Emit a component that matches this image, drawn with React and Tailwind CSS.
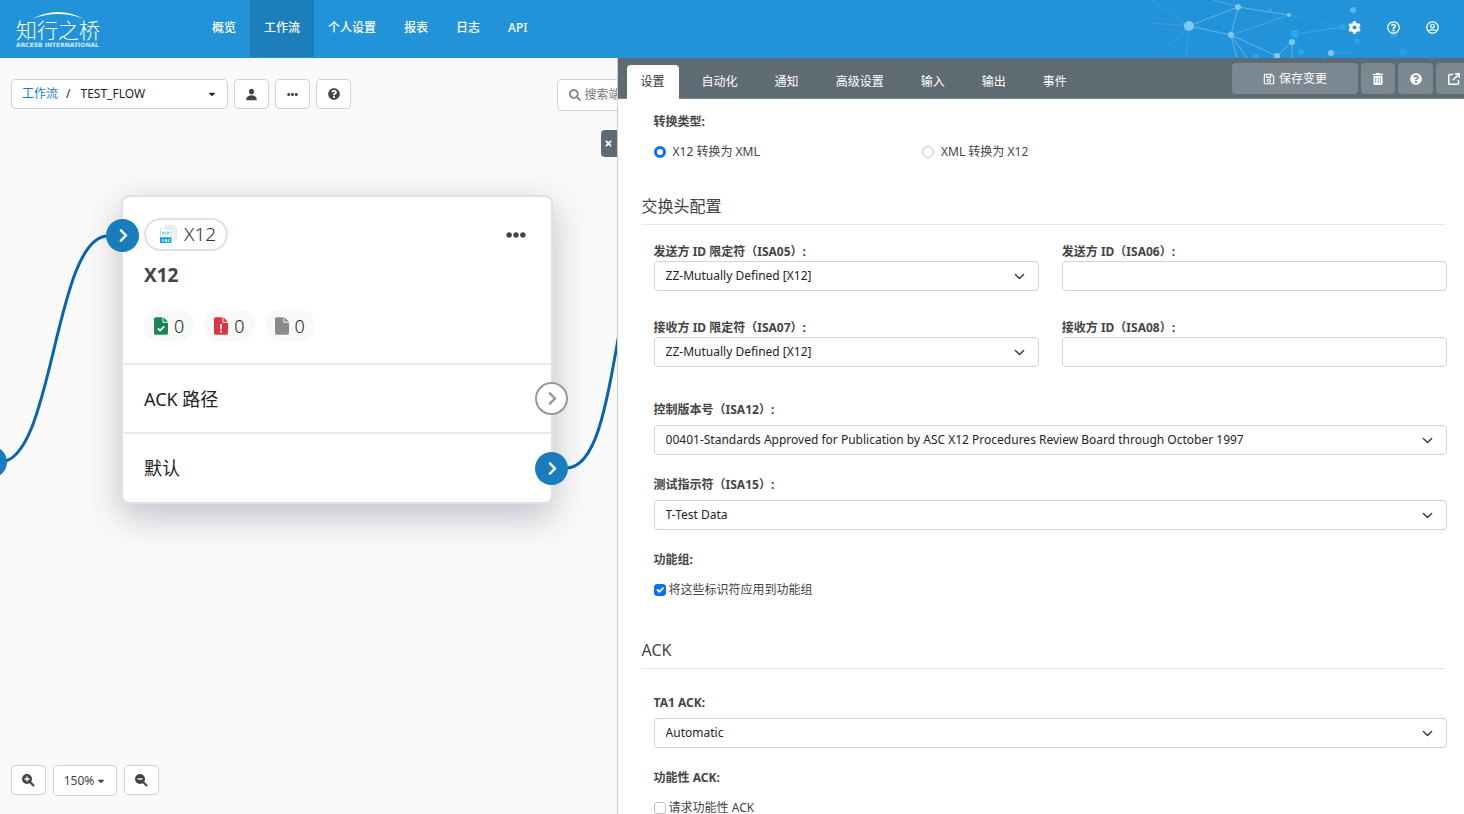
import { useState } from 'react'
import {
  FaEllipsisH, FaQuestionCircle, FaSearch, FaCaretDown, FaRegQuestionCircle,
  FaRegUserCircle, FaCog, FaRegSave, FaTimes, FaChevronRight,
} from 'react-icons/fa'
import { FaArrowUpRightFromSquare, FaTrashCan } from 'react-icons/fa6'
import { IoPerson } from 'react-icons/io5'

const NAV_ITEMS = ['概览', '工作流', '个人设置', '报表', '日志', 'API']
const TABS = ['设置', '自动化', '通知', '高级设置', '输入', '输出', '事件']

const toolButton = 'flex h-[30px] w-[35px] items-center justify-center rounded border border-[#ced4da] bg-white text-[#444]'
const actionButton = 'flex h-[31px] shrink-0 items-center justify-center gap-1 rounded bg-[#7b8791] text-white'

function Logo() {
  return (
    <svg width="86" height="38" viewBox="0 0 86 38" className="shrink-0" fill="#fff" role="img" aria-label="知行之桥">
      <path d="M17 9 Q43 -5 69 9 Q43 -1 17 9Z" />
      <text x="1" y="28" fontSize="21" fontWeight="300" fontFamily="'Noto Sans CJK SC', sans-serif">知行之桥</text>
      <text x="1" y="37" fontSize="6" fontWeight="700" opacity="0.8" fontFamily="'DejaVu Sans', sans-serif">ARCESB INTERNATIONAL</text>
    </svg>
  )
}

function NetworkArt() {
  return (
    <svg width="334" height="58" viewBox="0 0 334 58" className="absolute top-0 right-0" aria-hidden="true">
      <g stroke="#7cc4f3" fill="none" opacity="0.7">
        <path d="M59 26 L108 7 L101 35 L59 26 M101 35 L147 56 L162 42 V58 M101 35 L117 58 M101 35 L107 58 M108 7 L159 15" />
        <path d="M101 35 L159 15 M108 7 L83 0" opacity="0.6" />
        <path d="M59 26 L22 0 M59 26 L22 23 M59 26 L26 58 M59 26 L56 58 M201 53 H228 M201 53 L192 58" opacity="0.35" />
      </g>
      <path d="M165 34 L213 27" stroke="#35aef3" opacity="0.8" fill="none" />
      <path d="M140 10 L165 34 M213 27 L159 15 M165 34 L170 52" stroke="#35aef3" opacity="0.4" fill="none" />
      <g fill="#7cc8f7">
        <circle cx="59" cy="26" r="5" />
        <circle cx="108" cy="7" r="3" />
        <circle cx="101" cy="35" r="3" />
        <circle cx="162" cy="42" r="3" />
        <circle cx="147" cy="56" r="3" />
        <circle cx="201" cy="53" r="3" />
        <circle cx="159" cy="15" r="2" />
      </g>
      <g fill="#27a9f2">
        <circle cx="165" cy="34" r="4" />
        <circle cx="213" cy="27" r="3" />
        <circle cx="171" cy="52" r="3" />
        <circle cx="126" cy="57" r="3" />
        <circle cx="140" cy="10" r="2" />
      </g>
      <circle cx="223" cy="10" r="3" fill="#5eb5ee" />
      <circle cx="227" cy="41" r="3" fill="#2ea0e6" />
      <circle cx="273" cy="52" r="4" fill="#2e9de0" />
      <circle cx="264" cy="34" r="4" fill="#2ea0e6" />
    </svg>
  )
}

function Header() {
  return (
    <header className="relative flex h-[58px] shrink-0 items-center overflow-hidden bg-[#2293d8] pr-[25px] pl-[15px] text-white">
      <NetworkArt />
      <Logo />
      <nav className="ml-[97px] flex h-full pb-px">
        {NAV_ITEMS.map(item => (
          <a
            key={item}
            href="#"
            className={`flex items-center px-3.5 pb-0.5 font-medium ${item === '工作流' ? 'bg-[#1c7ebb]' : ''}`}
          >
            {item}
          </a>
        ))}
      </nav>
      <div className="relative ml-auto flex gap-[26px] pb-1 text-[13px]">
        <button type="button" aria-label="系统设置"><FaCog /></button>
        <button type="button" aria-label="帮助"><FaRegQuestionCircle /></button>
        <button type="button" aria-label="账户"><FaRegUserCircle /></button>
      </div>
    </header>
  )
}

function ZoomIcon({ plus }) {
  return (
    <svg width="13" height="13" viewBox="0 0 13 13" fill="none" aria-hidden="true">
      <circle cx="5" cy="5" r="5" fill="#444" />
      <path d="M8 8L12 12" stroke="#444" strokeWidth="2.2" />
      <path d={plus ? 'M2.500 5H7.500M5 2.500V7.500' : 'M2.500 5H7.500'} stroke="#fff" strokeWidth="1.4" />
    </svg>
  )
}

function FileIcon({ color, mark }) {
  return (
    <svg width="14" height="18" viewBox="0 0 15 19" aria-hidden="true">
      <path d="M2 0H9V5Q9 6 10 6H15V17Q15 19 13 19H2Q0 19 0 17V2Q0 0 2 0Z" fill={color} />
      <path d="M10 0L15 5H10Z" fill={color} />
      {mark === 'check' && <path d="M4 12L6.500 14.500L11 10" fill="none" stroke="#fff" strokeWidth="1.8" />}
      {mark === 'alert' && <path d="M6.500 7.500H8.500V13H6.500ZM6.500 14.500H8.500V16.500H6.500Z" fill="#fff" />}
    </svg>
  )
}

function X12Icon() {
  return (
    <svg width="17" height="18" viewBox="0 0 18 19" aria-hidden="true">
      <path d="M6 .5H14L17.500 4V15.500H6Z" fill="#eef0f2" stroke="#e3e5e9" />
      <path d="M.5 3.500H11.500V14H.5Z" fill="#fff" stroke="#bfe5f5" />
      <path d="M2.500 7L4.500 10M4.500 7L2.500 10M6 7V10M7.500 7.500H9.500V9H7.500" stroke="#5fbfe8" fill="none" />
      <path d="M0 13H12V19H0Z" fill="#0a9fe0" />
      <path d="M2 17.500L3 15L4 17.500M7.500 15.500H5.500V16.500H7.500V17.500H5.500M10.500 15.500H9V17.500H10.500" stroke="#d8f1fb" fill="none" />
    </svg>
  )
}

function Port({ filled, className }) {
  return (
    <button
      type="button"
      aria-label="端口"
      className={`absolute flex size-[33px] items-center justify-center rounded-full pl-0.5 ${
        filled ? 'bg-[#197dbb] text-white' : 'border-2 border-[#999] bg-white text-[#999]'
      } ${className}`}
    >
      <FaChevronRight size={15} />
    </button>
  )
}

function FlowNode() {
  const counts = [
    { label: '成功', color: '#198754', mark: 'check' },
    { label: '错误', color: '#dc3545', mark: 'alert' },
    { label: '待处理', color: '#8a8a8a' },
  ]
  return (
    <article className="absolute top-[137px] left-[121px] w-[432px] rounded-lg border-2 border-[#dee2e6] bg-white text-[18px] text-[#222] shadow-[0_12px_36px_rgba(40,40,70,0.28)]">
      <div className="px-[21px] pt-[21px] pb-[21px]">
        <div className="flex items-center justify-between">
          <span className="flex h-[33px] items-center gap-[7px] rounded-full border-2 border-[#dee2e6] pr-2.5 pb-0.5 pl-3.5 text-[19px] font-light text-[#333]">
            <X12Icon />X12
          </span>
          <button type="button" aria-label="更多" className="mr-1 text-[#444]"><FaEllipsisH size={20} /></button>
        </div>
        <h2 className="mt-2.5 text-[19px] leading-7 font-bold text-[#444]">X12</h2>
        <div className="mt-5 flex gap-2.5">
          {counts.map(c => (
            <span key={c.label} title={c.label} className="flex h-[33px] items-center gap-1.5 rounded-full bg-[#f8f9fa] px-2.5 font-light">
              <FileIcon color={c.color} mark={c.mark} />0
            </span>
          ))}
        </div>
      </div>
      <div className="relative flex h-[69px] items-center border-t-2 border-[#e9eaec] px-[21px]">
        ACK 路径
        <Port className="-right-[17px]" />
      </div>
      <div className="relative flex h-[70px] items-center border-t-2 border-[#e9eaec] px-[21px]">
        默认
        <Port filled className="-right-[17px]" />
      </div>
      <Port filled className="top-[22px] -left-[17px]" />
    </article>
  )
}

function FlowCanvas({ onClose }) {
  return (
    <section className="relative flex min-w-0 flex-[617] flex-col justify-between overflow-hidden bg-[#fafafa]">
      <svg className="absolute inset-0 size-full" fill="none" stroke="#0864b1" strokeWidth="3" aria-hidden="true">
        <path d="M0 404C54 404 54 178 108 178M566 410C596 410 606 350 620 270" />
        <circle cx="-9" cy="404" r="16" fill="#197dbb" stroke="none" />
      </svg>
      <FlowNode />
      <div>
        <div className="relative flex items-start gap-1.5 pt-[21px] pl-[11px]">
          <button type="button" className="flex h-[30px] w-[217px] shrink-0 items-center rounded border border-[#ced4da] bg-white px-2.5 text-[#222]">
            <span className="text-[#1c7ebb]">工作流</span>
            <span className="mr-2.5 ml-2">/</span>
            <span>TEST_FLOW</span>
            <FaCaretDown size={10} className="ml-auto" />
          </button>
          <button type="button" aria-label="用户" className={toolButton}><IoPerson size={13} /></button>
          <button type="button" aria-label="更多" className={toolButton}><FaEllipsisH size={11} /></button>
          <button type="button" aria-label="帮助" className={toolButton}><FaQuestionCircle /></button>
          <label className="-mr-[140px] ml-auto flex h-8 w-[200px] shrink-0 items-center gap-1 rounded border border-[#ced4da] bg-white px-[11px] text-[#8a8a8a]">
            <FaSearch size={12} className="shrink-0" />
            <input type="search" aria-label="搜索" placeholder="搜索端口" className="min-w-0 flex-1 outline-none placeholder:text-[#777]" />
          </label>
        </div>
        <button
          type="button"
          aria-label="关闭"
          onClick={onClose}
          className="relative mt-[19px] ml-auto flex h-[27px] w-4 items-center justify-center rounded-l-sm bg-[#5f6b73] text-white"
        >
          <FaTimes size={9} />
        </button>
      </div>
      <div className="relative flex items-start gap-[7px] pb-[18px] pl-[11px]">
        <button type="button" aria-label="放大" className={toolButton}><ZoomIcon plus /></button>
        <button type="button" className="flex h-[31px] w-16 items-center justify-center gap-0.5 rounded border border-[#ced4da] bg-white text-[#444]">
          150% <FaCaretDown size={10} />
        </button>
        <button type="button" aria-label="缩小" className={toolButton}><ZoomIcon /></button>
      </div>
    </section>
  )
}

function SectionTitle({ children, className }) {
  return (
    <h3 className={`-ml-3 mr-0.5 border-b border-[#e6e8ea] pb-1.5 text-[16px] leading-6 ${className}`}>{children}</h3>
  )
}

function SelectField({ id, label, value, className = '', gap = 'gap-1.5' }) {
  return (
    <div className={`flex flex-col ${gap} ${className}`}>
      <label htmlFor={id} className="font-bold">{label}</label>
      <div className="grid items-center">
        <select id={id} className="col-start-1 row-start-1 h-[30px] w-full appearance-none rounded border border-[#ced4da] bg-white px-[11px] text-[#212529]">
          <option>{value}</option>
        </select>
        <svg width="11" height="11" viewBox="0 0 16 16" className="pointer-events-none col-start-1 row-start-1 mr-3.5 justify-self-end" fill="none" stroke="#343a40" strokeWidth="2" strokeLinecap="round" strokeLinejoin="round" aria-hidden="true">
          <path d="m2 5 6 6 6-6" />
        </svg>
      </div>
    </div>
  )
}

function TextField({ id, label }) {
  return (
    <div className="flex flex-col">
      <label htmlFor={id} className="font-bold">{label}</label>
      <input id={id} type="text" className="h-[30px] w-full rounded border border-[#ced4da] bg-white px-[11px]" />
    </div>
  )
}

function Checkbox({ label, defaultChecked }) {
  const [checked, setChecked] = useState(!!defaultChecked)
  return (
    <label className="mt-3 flex items-center gap-[3px]">
      <span className="grid place-items-center">
        <input
          type="checkbox"
          checked={checked}
          onChange={e => setChecked(e.target.checked)}
          className="col-start-1 row-start-1 size-3 appearance-none rounded-[3px] border border-[#bfbfbf] bg-white checked:border-[#0d6efd] checked:bg-[#0d6efd]"
        />
        {checked && (
          <svg width="12" height="12" viewBox="0 0 20 20" className="pointer-events-none col-start-1 row-start-1" fill="none" stroke="#fff" strokeWidth="3" strokeLinecap="round" strokeLinejoin="round" aria-hidden="true">
            <path d="m6 10 3 3 6-6" />
          </svg>
        )}
      </span>
      {label}
    </label>
  )
}

function Radio({ label, defaultChecked }) {
  return (
    <label className="flex items-center gap-[7px]">
      <input
        type="radio"
        name="translation"
        defaultChecked={defaultChecked}
        className="size-3 appearance-none rounded-full border border-[#bfbfbf] bg-white checked:border-[3px] checked:border-[#0d6efd]"
      />
      {label}
    </label>
  )
}

function SettingsPanel() {
  const [tab, setTab] = useState('设置')
  return (
    <section className="flex min-w-0 flex-[847] flex-col overflow-hidden border-l border-[#ccc] bg-white text-[#444]">
      <div className="flex h-[41px] shrink-0 items-end border-b border-[#7b8791] bg-[#5f6b73] pl-[9px]">
        <div role="tablist" className="flex gap-[9px]">
          {TABS.map(t => (
            <button
              key={t}
              type="button"
              role="tab"
              aria-selected={tab === t}
              onClick={() => setTab(t)}
              className={`-mb-px h-[34px] rounded-t px-3.5 whitespace-nowrap ${tab === t ? 'bg-white text-[#333]' : 'text-white'}`}
            >
              {t}
            </button>
          ))}
        </div>
        <div className="-mr-[7px] mb-1 ml-auto flex gap-[3px]">
          <button type="button" className={`${actionButton} w-[126px]`}><FaRegSave />保存变更</button>
          <button type="button" aria-label="删除" className={`${actionButton} w-[34px]`}><FaTrashCan /></button>
          <button type="button" aria-label="帮助" className={`${actionButton} w-[35px]`}><FaQuestionCircle /></button>
          <button type="button" aria-label="在新窗口打开" className={`${actionButton} w-[35px]`}><FaArrowUpRightFromSquare /></button>
        </div>
      </div>

      <form className="min-h-0 flex-1 overflow-hidden pt-3.5 pr-[17px] pl-9">
        <fieldset>
          <legend className="font-bold">转换类型:</legend>
          <div className="mt-3 grid grid-cols-3 gap-3">
            <Radio label="X12 转换为 XML" defaultChecked />
            <Radio label="XML 转换为 X12" />
          </div>
        </fieldset>

        <SectionTitle className="mt-[33px]">交换头配置</SectionTitle>
        <div className="mt-[18px] grid grid-cols-2 gap-x-[23px] gap-y-7">
          <SelectField id="isa05" label="发送方 ID 限定符（ISA05）:" value="ZZ-Mutually Defined [X12]" gap="gap-0" />
          <TextField id="isa06" label="发送方 ID（ISA06）:" />
          <SelectField id="isa07" label="接收方 ID 限定符（ISA07）:" value="ZZ-Mutually Defined [X12]" gap="gap-0" />
          <TextField id="isa08" label="接收方 ID（ISA08）:" />
        </div>
        <SelectField
          id="isa12"
          label="控制版本号（ISA12）:"
          value="00401-Standards Approved for Publication by ASC X12 Procedures Review Board through October 1997"
          className="mt-[34px]"
        />
        <SelectField id="isa15" label="测试指示符（ISA15）:" value="T-Test Data" className="mt-[21px]" />
        <fieldset className="mt-[21px]">
          <legend className="font-bold">功能组:</legend>
          <Checkbox label="将这些标识符应用到功能组" defaultChecked />
        </fieldset>

        <SectionTitle className="mt-[39px]">ACK</SectionTitle>
        <SelectField id="ta1" label="TA1 ACK:" value="Automatic" className="mt-[25px]" />
        <fieldset className="mt-[21px]">
          <legend className="font-bold">功能性 ACK:</legend>
          <Checkbox label="请求功能性 ACK" />
        </fieldset>
      </form>
    </section>
  )
}

export default function App() {
  const [open, setOpen] = useState(true)
  return (
    <div className="flex h-screen flex-col overflow-hidden font-['Noto_Sans','Noto_Sans_CJK_SC',sans-serif] text-[12px] leading-[18px]">
      <Header />
      <main className="flex min-h-0 flex-1">
        <FlowCanvas onClose={() => setOpen(false)} />
        {open && <SettingsPanel />}
      </main>
    </div>
  )
}
